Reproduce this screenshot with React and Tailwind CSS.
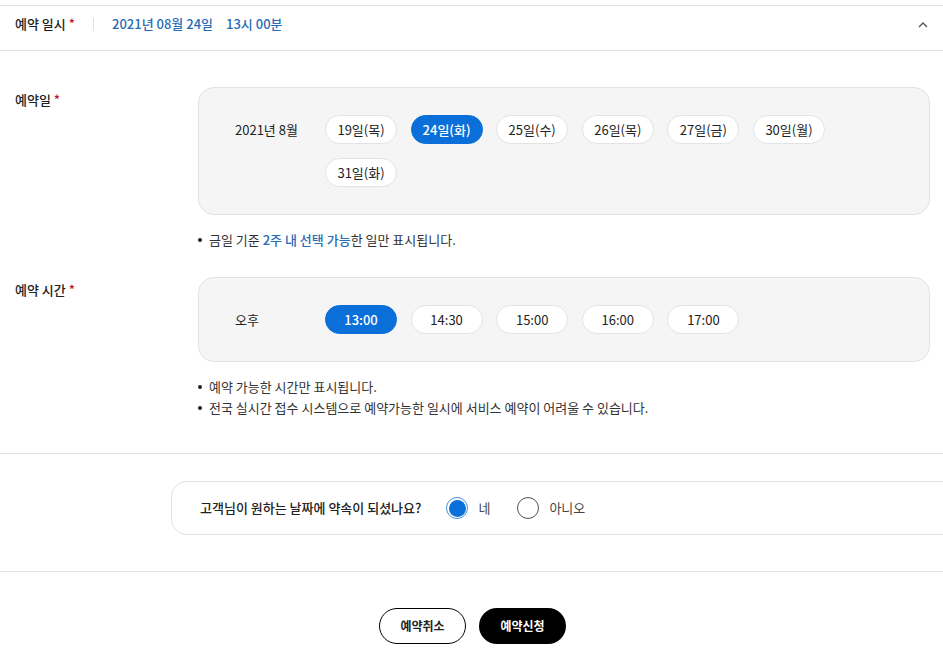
import React, { useState } from "react";

const dates = ["19일(목)", "24일(화)", "25일(수)", "26일(목)", "27일(금)", "30일(월)", "31일(화)"];
const times = ["13:00", "14:30", "15:00", "16:00", "17:00"];

const Chip = ({ label, active, onClick }) => (
  <button
    onClick={onClick}
    className={`w-[72px] h-[29px] rounded-full text-[13px] leading-none border ${
      active
        ? "bg-[#0a6fd8] border-[#0a6fd8] text-white font-medium"
        : "bg-white border-[#e3e3e3] text-[#222]"
    }`}
  >
    {label}
  </button>
);

const Radio = ({ checked, label, onClick }) => (
  <label onClick={onClick} className="flex items-center gap-[10px] cursor-pointer">
    {checked ? (
      <span className="w-[22px] h-[22px] rounded-full border border-[#4a8fdc] flex items-center justify-center">
        <span className="w-[17px] h-[17px] rounded-full bg-[#0a6fd8]" />
      </span>
    ) : (
      <span className="w-[22px] h-[22px] rounded-full border border-[#555]" />
    )}
    <span className="text-[13px] text-[#444]">{label}</span>
  </label>
);

const Note = ({ children }) => (
  <li className="flex items-center gap-[7px] h-[21px]">
    <span className="w-[4px] h-[4px] rounded-full bg-[#222]" />
    <span>{children}</span>
  </li>
);

const App = () => {
  const [date, setDate] = useState("24일(화)");
  const [time, setTime] = useState("13:00");
  const [agree, setAgree] = useState(true);

  return (
    <div className="w-[943px] h-[660px] overflow-hidden bg-white text-[#222] font-['Noto_Sans_CJK_KR','Noto_Sans',sans-serif]">
      {/* Header */}
      <div className="mt-[5px] h-[46px] pb-[8px] border-y border-[#e2e2e2] flex items-center pl-[15px] pr-[15px]">
        <span className="text-[13px] font-medium">
          예약 일시 <span className="text-[#c8102e]">*</span>
        </span>
        <span className="mx-[18px] h-[13px] w-px bg-[#e0e0e0]" />
        <span className="text-[13px] text-[#2a6cb6] font-medium">2021년 08월 24일</span>
        <span className="ml-[13px] text-[13px] text-[#2a6cb6] font-medium">13시 00분</span>
        <svg className="ml-auto" width="10" height="7" viewBox="0 0 10 7" fill="none">
          <polyline points="1,6 5,2 9,6" stroke="#555" strokeWidth="1.4" />
        </svg>
      </div>

      {/* Body */}
      <div className="pt-[36px] pl-[15px] pr-[13px] h-[403px] border-b border-[#e2e2e2]">
        <div className="flex">
          <div className="w-[183px] pt-[3px] text-[13px] font-medium">
            예약일 <span className="text-[#c8102e]">*</span>
          </div>
          <div className="flex-1">
            <div className="rounded-[16px] border border-[#e2e2e2] bg-[#f5f5f5] pl-[36px] py-[27px] flex">
              <div className="w-[90px] h-[29px] flex items-center text-[13px]">2021년 8월</div>
              <div className="flex flex-wrap gap-x-[13.6px] gap-y-[14px] w-[510px]">
                {dates.map((d) => (
                  <Chip key={d} label={d} active={date === d} onClick={() => setDate(d)} />
                ))}
              </div>
            </div>
            <ul className="mt-[14px] text-[13px] text-[#333]">
              <Note>
                금일 기준 <span className="text-[#2a6cb6] font-medium">2주 내 선택 가능</span>한 일만 표시됩니다.
              </Note>
            </ul>
          </div>
        </div>

        <div className="flex mt-[27px]">
          <div className="w-[183px] pt-[3px] text-[13px] font-medium">
            예약 시간 <span className="text-[#c8102e]">*</span>
          </div>
          <div className="flex-1">
            <div className="rounded-[16px] border border-[#e2e2e2] bg-[#f5f5f5] pl-[36px] py-[27px] flex">
              <div className="w-[90px] h-[29px] flex items-center text-[13px]">오후</div>
              <div className="flex gap-[13.6px]">
                {times.map((t) => (
                  <Chip key={t} label={t} active={time === t} onClick={() => setTime(t)} />
                ))}
              </div>
            </div>
            <ul className="mt-[14px] text-[13px] text-[#333]">
              <Note>예약 가능한 시간만 표시됩니다.</Note>
              <Note>전국 실시간 접수 시스템으로 예약가능한 일시에 서비스 예약이 어려울 수 있습니다.</Note>
            </ul>
          </div>
        </div>
      </div>

      {/* Question */}
      <div className="pt-[27px] pb-[36px] pl-[171px] border-b border-[#e2e2e2]">
        <div className="h-[54px] w-[790px] rounded-[16px] border border-[#e2e2e2] flex items-center pl-[28px]">
          <span className="text-[13px] font-medium text-[#222]">고객님이 원하는 날짜에 약속이 되셨나요?</span>
          <div className="ml-[25px] flex items-center gap-[27px]">
            <Radio checked={agree} label="네" onClick={() => setAgree(true)} />
            <Radio checked={!agree} label="아니오" onClick={() => setAgree(false)} />
          </div>
        </div>
      </div>

      {/* Buttons */}
      <div className="pt-[36px] flex justify-center gap-[13px] pl-[2px]">
        <button className="w-[87px] h-[36px] rounded-full border border-black bg-white text-[12px] font-bold text-[#222]">
          예약취소
        </button>
        <button className="w-[87px] h-[36px] rounded-full bg-black text-[12px] font-bold text-white">
          예약신청
        </button>
      </div>
    </div>
  );
};

export default App;
